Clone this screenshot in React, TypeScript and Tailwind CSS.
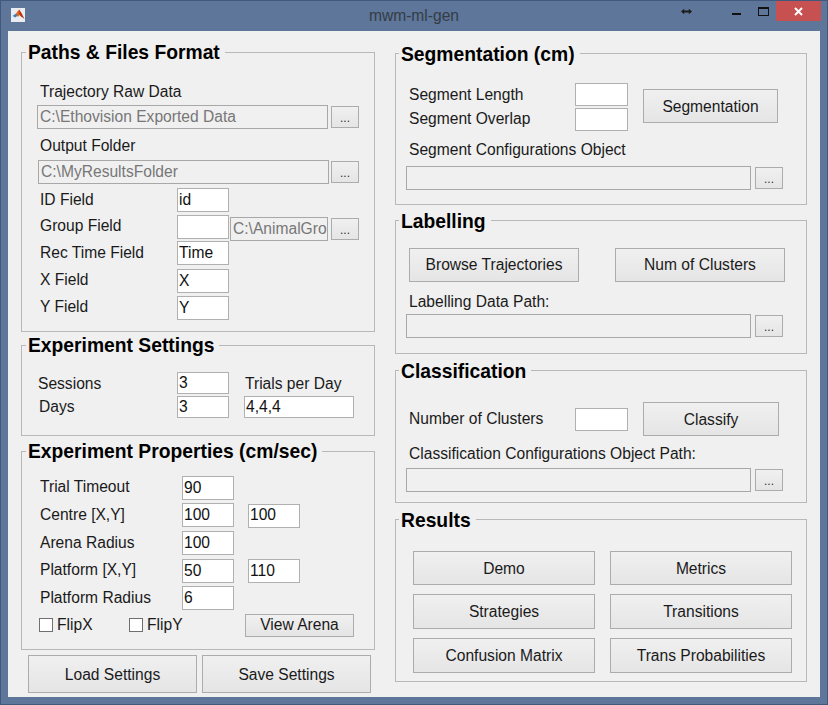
import type { ReactNode } from "react";

const Panel = ({ title, className, titleClass, children }: { title: string; className: string; titleClass: string; children: ReactNode }) => (
  <div className={`relative border border-[#b8b8b8] ${className}`}>
    <div className={`absolute h-[24px] bg-[#f0f0f0] pl-[2px] pr-[5px] text-[19.3px] leading-[24px] font-bold text-black whitespace-nowrap ${titleClass}`}>
      {title}
    </div>
    {children}
  </div>
);

const LEFT_TITLE = "left-[4px] top-[-12px]";
const RIGHT_TITLE = "left-[3px] top-[-11px]";

const Label = ({ className, children }: { className: string; children: ReactNode }) => (
  <span className={`shrink-0 text-[15.6px] leading-[24px] text-[#1a1a1a] whitespace-nowrap ${className}`}>{children}</span>
);

const Input = ({ value, className }: { value?: string; className: string }) => (
  <div className={`shrink-0 flex items-center border border-[#b0b0b0] bg-white pb-[1px] pl-[1px] text-[15.6px] text-[#111] ${className}`}>
    {value}
  </div>
);

const PathInput = ({ value, className }: { value?: string; className: string }) => (
  <div className={`shrink-0 h-[24px] overflow-hidden whitespace-nowrap border border-[#a8a8a8] bg-[#f0f0f0] pl-[2px] text-[15.6px] leading-[21px] text-[#777] ${className}`}>
    {value}
  </div>
);

const Browse = ({ className = "" }: { className?: string }) => (
  <div className={`shrink-0 h-[22px] w-[28px] border border-[#acacac] bg-gradient-to-b from-[#f0f0f0] to-[#e5e5e5] text-center text-[12px] leading-[22px] text-[#333] ${className}`}>
    ...
  </div>
);

const Button = ({ label, className }: { label: string; className: string }) => (
  <div className={`shrink-0 flex items-center justify-center border border-[#acacac] bg-gradient-to-b from-[#f0f0f0] to-[#e5e5e5] text-[15.6px] text-[#1a1a1a] whitespace-nowrap ${className}`}>
    {label}
  </div>
);

const Check = ({ label, className }: { label: string; className: string }) => (
  <div className={`flex items-center gap-[4px] ${className}`}>
    <div className="h-[14px] w-[14px] border border-[#707070] bg-white" />
    <span className="text-[15.6px] leading-[24px] text-[#1a1a1a]">{label}</span>
  </div>
);

const Row = ({ className, children }: { className: string; children: ReactNode }) => (
  <div className={`flex items-center ${className}`}>{children}</div>
);

const MatlabIcon = () => (
  <div className="flex h-[14px] w-[14px] items-center justify-center bg-[#e9edf2]">
    <svg width="13" height="12" viewBox="0 0 13 12">
      <path d="M0.5 7 L4 4.5 L6 6 L3.5 8.5 Z" fill="#3f7fb8" />
      <path d="M4 4.5 L7 0.5 L9 4 L6 8 Z" fill="#e0641e" />
      <path d="M7 0.5 L9.5 4 L12.5 10 L9 7.5 L7.5 6 Z" fill="#b8340f" />
    </svg>
  </div>
);

const TitleBar = () => (
  <div className="relative flex h-[31px] items-start">
    <div className="ml-[11px] mt-[8px]">
      <MatlabIcon />
    </div>
    <div className="absolute left-0 right-0 top-[6px] text-center text-[15.6px] leading-[20px] text-[#353c46]">mwm-ml-gen</div>
    <svg className="ml-auto mt-[8px]" width="11" height="7" viewBox="0 0 12 7">
      <path d="M0 3.5 L3.5 0.5 V2.5 H8.5 V0.5 L12 3.5 L8.5 6.5 V4.5 H3.5 V6.5 Z" fill="#1c1c1c" />
    </svg>
    <div className="ml-[40px] mt-[13px] h-[2px] w-[9px] bg-[#111]" />
    <div className="ml-[17px] mt-[7px] h-[9px] w-[11px] border border-t-2 border-[#111]" />
    <div className="ml-[7px] mr-[7px] mt-[1px] flex h-[20px] w-[45px] items-center justify-center bg-[#c75050]">
      <svg width="9" height="9" viewBox="0 0 9 9">
        <path d="M1 1 L8 8 M8 1 L1 8" stroke="#fff" strokeWidth="2" />
      </svg>
    </div>
  </div>
);

const PathsPanel = () => (
  <Panel title="Paths & Files Format" titleClass={LEFT_TITLE} className="h-[280px] w-[354px] pt-[27px]">
    <Label className="ml-[18px] block">Trajectory Raw Data</Label>
    <Row className="ml-[15px] mt-[1px]">
      <PathInput value="C:\Ethovision Exported Data" className="w-[291px]" />
      <Browse className="ml-[3px]" />
    </Row>
    <Label className="ml-[18px] mt-[5px] block">Output Folder</Label>
    <Row className="ml-[16px] mt-[2px]">
      <PathInput value="C:\MyResultsFolder" className="w-[291px]" />
      <Browse className="ml-[2px]" />
    </Row>
    <Row className="ml-[18px] mt-[4px] h-[24px]">
      <Label className="w-[137px]">ID Field</Label>
      <Input value="id" className="h-[24px] w-[52px]" />
    </Row>
    <Row className="ml-[18px] mt-[3px] h-[24px]">
      <Label className="mb-[2px] w-[137px]">Group Field</Label>
      <Input className="h-[24px] w-[52px]" />
      <PathInput value="C:\AnimalGro" className="ml-[1px] mt-[4px] w-[98px]" />
      <Browse className="ml-[3px] mt-[3px]" />
    </Row>
    <Row className="ml-[18px] mt-[2px] h-[24px]">
      <Label className="w-[137px]">Rec Time Field</Label>
      <Input value="Time" className="h-[24px] w-[52px]" />
    </Row>
    <Row className="ml-[18px] mt-[4px] h-[24px]">
      <Label className="mb-[2px] w-[137px]">X Field</Label>
      <Input value="X" className="h-[24px] w-[52px]" />
    </Row>
    <Row className="ml-[18px] mt-[3px] h-[24px]">
      <Label className="mb-[2px] w-[137px]">Y Field</Label>
      <Input value="Y" className="h-[24px] w-[52px]" />
    </Row>
  </Panel>
);

const SettingsPanel = () => (
  <Panel title="Experiment Settings" titleClass={LEFT_TITLE} className="mt-[13px] h-[91px] w-[354px] pt-[26px]">
    <Row className="ml-[16px] h-[22px]">
      <Label className="mt-[2px] w-[139px]">Sessions</Label>
      <Input value="3" className="h-[22px] w-[52px]" />
      <Label className="ml-[16px] mt-[2px]">Trials per Day</Label>
    </Row>
    <Row className="ml-[16px] mt-[2px] h-[22px]">
      <Label className="w-[139px] pl-[1px]">Days</Label>
      <Input value="3" className="h-[22px] w-[52px]" />
      <Input value="4,4,4" className="ml-[15px] h-[22px] w-[110px]" />
    </Row>
  </Panel>
);

const PropertiesPanel = () => (
  <Panel title="Experiment Properties (cm/sec)" titleClass={LEFT_TITLE} className="mt-[15px] h-[199px] w-[354px] pt-[24px]">
    <Row className="ml-[17px] h-[24px]">
      <Label className="mb-[2px] w-[143px] pl-[1px]">Trial Timeout</Label>
      <Input value="90" className="h-[24px] w-[52px]" />
    </Row>
    <Row className="ml-[18px] mt-[3px] h-[24px]">
      <Label className="w-[142px]">Centre [X,Y]</Label>
      <Input value="100" className="h-[24px] w-[52px]" />
      <Input value="100" className="ml-[14px] mt-[1px] h-[24px] w-[52px]" />
    </Row>
    <Row className="ml-[18px] mt-[4px] h-[24px]">
      <Label className="w-[142px]">Arena Radius</Label>
      <Input value="100" className="h-[24px] w-[52px]" />
    </Row>
    <Row className="ml-[18px] mt-[4px] h-[24px]">
      <Label className="mb-[3px] w-[142px]">Platform [X,Y]</Label>
      <Input value="50" className="h-[24px] w-[52px]" />
      <Input value="110" className="ml-[14px] h-[24px] w-[52px]" />
    </Row>
    <Row className="ml-[18px] mt-[3px] h-[24px]">
      <Label className="w-[142px]">Platform Radius</Label>
      <Input value="6" className="h-[24px] w-[52px]" />
    </Row>
    <Row className="ml-[17px] mt-[3px]">
      <Check label="FlipX" className="w-[90px]" />
      <Check label="FlipY" className="w-[116px]" />
      <Button label="View Arena" className="h-[23px] w-[109px]" />
    </Row>
  </Panel>
);

const SegmentationPanel = () => (
  <Panel title="Segmentation (cm)" titleClass={RIGHT_TITLE} className="h-[152px] w-[412px] pt-[29px]">
    <div className="flex">
      <div className="w-[179px] pl-[13px]">
        <Label className="block">Segment Length</Label>
        <Label className="block">Segment Overlap</Label>
      </div>
      <div className="flex flex-col gap-[2px]">
        <Input className="h-[23px] w-[53px]" />
        <Input className="h-[23px] w-[53px]" />
      </div>
      <Button label="Segmentation" className="ml-[15px] mt-[6px] h-[34px] w-[135px] pt-[2px]" />
    </div>
    <Label className="ml-[13px] mt-[7px] block">Segment Configurations Object</Label>
    <div className="ml-[10px] mt-[4px] flex items-center">
      <PathInput className="h-[23px] w-[345px]" />
      <Browse className="ml-[4px] h-[20px]" />
    </div>
  </Panel>
);

const LabellingPanel = () => (
  <Panel title="Labelling" titleClass={RIGHT_TITLE} className="mt-[15px] h-[134px] w-[412px] pt-[27px]">
    <div className="ml-[13px] flex">
      <Button label="Browse Trajectories" className="h-[34px] w-[170px]" />
      <Button label="Num of Clusters" className="ml-[36px] h-[34px] w-[170px]" />
    </div>
    <Label className="ml-[13px] mt-[8px] block">Labelling Data Path:</Label>
    <div className="ml-[10px] flex items-center">
      <PathInput className="h-[23px] w-[345px]" />
      <Browse className="ml-[4px] h-[20px]" />
    </div>
  </Panel>
);

const ClassificationPanel = () => (
  <Panel title="Classification" titleClass={RIGHT_TITLE} className="mt-[16px] h-[133px] w-[412px] pt-[31px]">
    <div className="flex">
      <Label className="mt-[5px] w-[179px] pl-[13px]">Number of Clusters</Label>
      <Input className="mt-[6px] h-[23px] w-[53px]" />
      <Button label="Classify" className="ml-[15px] h-[34px] w-[136px] pt-[2px]" />
    </div>
    <Label className="ml-[13px] mt-[6px] block">Classification Configurations Object Path:</Label>
    <div className="ml-[10px] mt-[2px] flex items-center">
      <PathInput className="h-[23px] w-[345px]" />
      <Browse className="ml-[4px] h-[20px]" />
    </div>
  </Panel>
);

const ResultsPanel = () => (
  <Panel title="Results" titleClass={RIGHT_TITLE} className="mt-[16px] h-[163px] w-[412px] pl-[17px] pt-[31px]">
    <div className="grid grid-cols-[182px_182px] grid-rows-[34px_35px_35px] gap-x-[15px] gap-y-[9px]">
      <Button label="Demo" className="h-full pt-[2px]" />
      <Button label="Metrics" className="h-full pt-[2px]" />
      <Button label="Strategies" className="h-full" />
      <Button label="Transitions" className="h-full" />
      <Button label="Confusion Matrix" className="h-full" />
      <Button label="Trans Probabilities" className="h-full" />
    </div>
  </Panel>
);

export default function App() {
  return (
    <div className="h-[705px] w-[828px] overflow-hidden bg-[#5d7699] shadow-[inset_0_0_0_1px_#41597c] font-['Liberation_Sans',Arial,sans-serif]">
      <TitleBar />
      <div className="mx-[8px] flex h-[666px] bg-[#f0f0f0] pl-[13px] pt-[21px]">
        <div className="w-[354px]">
          <PathsPanel />
          <SettingsPanel />
          <PropertiesPanel />
          <div className="ml-[7px] mt-[5px] flex gap-[5px]">
            <Button label="Load Settings" className="h-[38px] w-[169px] pt-[2px]" />
            <Button label="Save Settings" className="h-[38px] w-[169px] pt-[2px]" />
          </div>
        </div>
        <div className="ml-[20px] mt-[1px] w-[412px]">
          <SegmentationPanel />
          <LabellingPanel />
          <ClassificationPanel />
          <ResultsPanel />
        </div>
      </div>
    </div>
  );
}
